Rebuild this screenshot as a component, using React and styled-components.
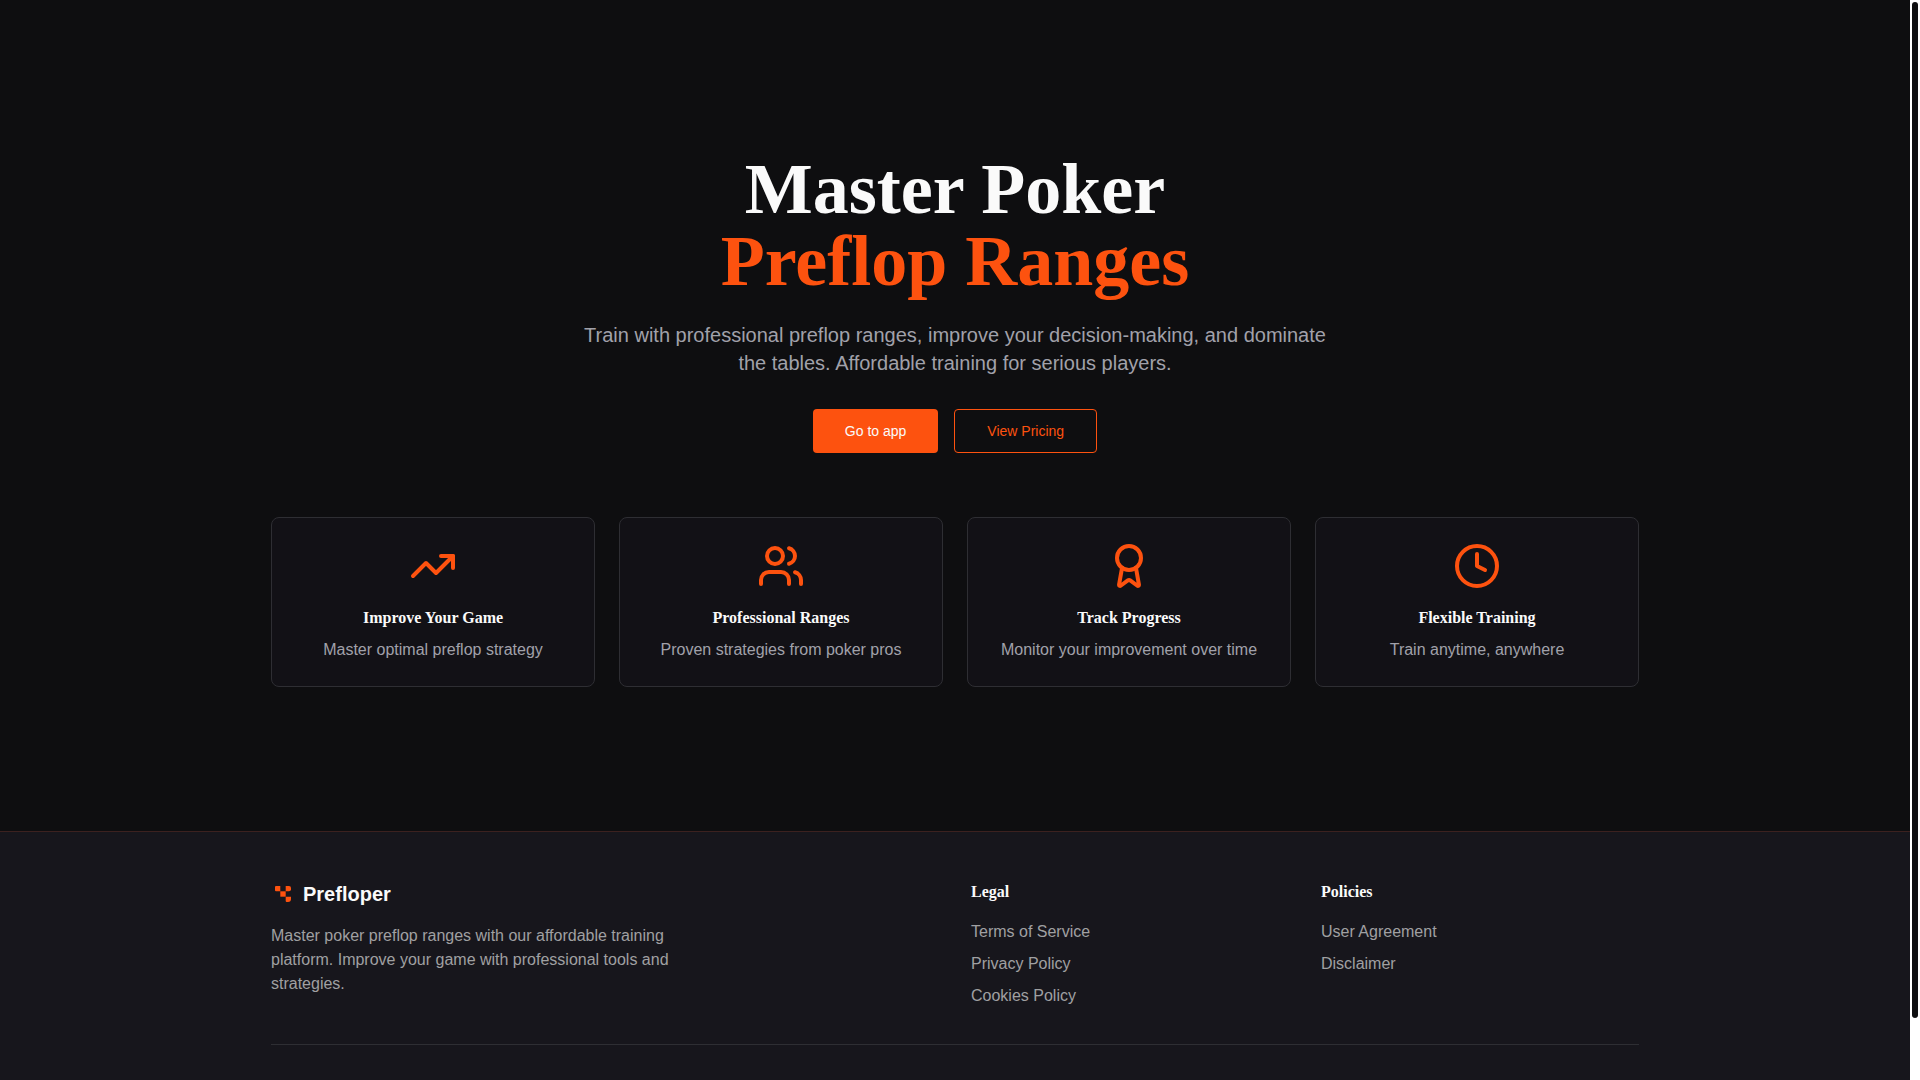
import { useEffect, useRef, useState } from "react"
import styled, { createGlobalStyle, css } from "styled-components"
import { TrendingUp, Users, Award, Clock } from "lucide-react"

const GlobalStyle = createGlobalStyle`
  :root {
    --color-accent: #fd520f;
    --color-white: #fafafa;
    --color-muted: #a1a1aa;
    --color-bg: #0e0e10;
    --color-card: #121116;
    --color-footer: #17161c;
    --color-line: #2e2e33;
    --font-heading: "Liberation Serif", serif;
    --font-body: "Liberation Sans", sans-serif;
  }

  *, *::before, *::after {
    box-sizing: border-box;
    margin: 0;
    padding: 0;
  }

  body {
    background-color: var(--color-bg);
    color: var(--color-white);
    font-family: var(--font-body);
    font-size: 16px;
    line-height: 24px;
  }
`

const Page = styled.div`
  display: flex;
  height: 100vh;
`

const ScrollArea = styled.div`
  flex: 1;
  min-width: 0;
  overflow-y: auto;
  scrollbar-width: none;
`

const ScrollTrack = styled.div`
  width: 10px;
  flex-shrink: 0;
  background-color: #ffffff;
`

const ScrollThumb = styled.div`
  border: 2px solid transparent;
  border-radius: 6px;
  background-color: var(--color-bg);
  background-clip: padding-box;
`

const Container = styled.div`
  width: 100%;
  max-width: 1400px;
  margin: 0 auto;
  padding: 0 16px;
`

const Hero = styled.main`
  padding: 153px 0 144px;
  text-align: center;
`

const Title = styled.h1`
  font-family: var(--font-heading);
  font-size: 72px;
  font-weight: 700;
  line-height: 72px;
  margin-bottom: 24px;
`

const TitleAccent = styled.span`
  display: block;
  color: var(--color-accent);
`

const Lead = styled.p`
  max-width: 768px;
  margin: 0 auto 32px;
  color: var(--color-muted);
  font-size: 20px;
  line-height: 28px;
`

const Actions = styled.div`
  display: flex;
  flex-wrap: wrap;
  justify-content: center;
  gap: 16px;
  margin-bottom: 64px;
`

const Button = styled.button`
  height: 44px;
  padding: 0 32px;
  border: none;
  border-radius: 4px;
  background-color: var(--color-accent);
  color: var(--color-white);
  font-family: var(--font-body);
  font-size: 14px;
  line-height: 20px;
  cursor: pointer;

  ${({ $outline }) => $outline && css`
    border: 1px solid var(--color-accent);
    background-color: transparent;
    color: var(--color-accent);
  `}
`

const Features = styled.div`
  display: grid;
  grid-template-columns: repeat(4, 1fr);
  gap: 24px;

  @media (max-width: 1023px) {
    grid-template-columns: repeat(2, 1fr);
  }
`

const Card = styled.div`
  display: flex;
  flex-direction: column;
  align-items: center;
  padding: 24px;
  border: 1px solid var(--color-line);
  border-radius: 8px;
  background-color: var(--color-card);

  svg {
    color: var(--color-accent);
    margin-bottom: 16px;
  }
`

const Heading = styled.h3`
  font-family: var(--font-heading);
  font-size: 16px;
  font-weight: 700;
  margin-bottom: ${({ $gap }) => $gap};
`

const CardText = styled.p`
  color: var(--color-muted);
`

const FooterWrapper = styled.footer`
  border-top: 1px solid #3c211f;
  background-color: var(--color-footer);
  padding: 48px 0;
`

const FooterGrid = styled.div`
  display: grid;
  grid-template-columns: repeat(4, 1fr);
  gap: 32px;
`

const Brand = styled.div`
  grid-column: span 2;
`

const BrandName = styled.div`
  display: flex;
  align-items: center;
  gap: 8px;
  margin-bottom: 16px;
  font-size: 20px;
  font-weight: 700;
  line-height: 28px;
`

const BrandText = styled.p`
  max-width: 448px;
  color: #a0a0a2;
`

const LinkList = styled.ul`
  display: flex;
  flex-direction: column;
  gap: 8px;
  list-style: none;
`

const FooterLink = styled.a`
  color: #a0a0a2;
  text-decoration: none;

  &:hover {
    color: var(--color-accent);
  }
`

const FooterBottom = styled.div`
  margin-top: 36px;
  border-top: 1px solid var(--color-line);
  height: 52px;
`

const features = [
  { icon: TrendingUp, title: "Improve Your Game", text: "Master optimal preflop strategy" },
  { icon: Users, title: "Professional Ranges", text: "Proven strategies from poker pros" },
  { icon: Award, title: "Track Progress", text: "Monitor your improvement over time" },
  { icon: Clock, title: "Flexible Training", text: "Train anytime, anywhere" },
]

const columns = [
  { title: "Legal", links: ["Terms of Service", "Privacy Policy", "Cookies Policy"] },
  { title: "Policies", links: ["User Agreement", "Disclaimer"] },
]

const Logo = () => (
  <svg width="24" height="24" viewBox="0 0 24 24" fill="#fd520f" aria-hidden="true">
    <path d="M5 4h4.3v5.3H5a1 1 0 0 1-1-1V5a1 1 0 0 1 1-1z" />
    <path d="M14.7 4H18a2 2 0 0 1 2 2v1.3a2 2 0 0 1-2 2h-3.3z" />
    <path d="M9.3 9.3h5.4v5.4H9.3z" />
    <path d="M14.7 14.7H20V17a3 3 0 0 1-3 3h-1.3a1 1 0 0 1-1-1z" />
  </svg>
)

const App = () => {
  const areaRef = useRef(null)
  const [thumb, setThumb] = useState({ height: 0, top: 0 })

  useEffect(() => {
    const area = areaRef.current
    const update = () => {
      const ratio = area.clientHeight / area.scrollHeight
      setThumb({
        height: ratio < 1 ? Math.round(area.clientHeight * ratio) : 0,
        top: Math.round(area.scrollTop * ratio),
      })
    }

    update()
    area.addEventListener("scroll", update)
    window.addEventListener("resize", update)
    return () => {
      area.removeEventListener("scroll", update)
      window.removeEventListener("resize", update)
    }
  }, [])

  return (
    <Page>
      <GlobalStyle />
      <ScrollArea ref={areaRef}>
        <Hero>
          <Container>
            <Title>
              Master Poker
              <TitleAccent>Preflop Ranges</TitleAccent>
            </Title>
            <Lead>
              Train with professional preflop ranges, improve your decision-making, and dominate the tables. Affordable training for serious players.
            </Lead>
            <Actions>
              <Button type="button">Go to app</Button>
              <Button type="button" $outline>View Pricing</Button>
            </Actions>
            <Features>
              {features.map(({ icon: Icon, title, text }) => (
                <Card key={title}>
                  <Icon size={48} />
                  <Heading $gap="8px">{title}</Heading>
                  <CardText>{text}</CardText>
                </Card>
              ))}
            </Features>
          </Container>
        </Hero>
        <FooterWrapper>
          <Container>
            <FooterGrid>
              <Brand>
                <BrandName>
                  <Logo />
                  Prefloper
                </BrandName>
                <BrandText>
                  Master poker preflop ranges with our affordable training platform. Improve your game with professional tools and strategies.
                </BrandText>
              </Brand>
              {columns.map(({ title, links }) => (
                <div key={title}>
                  <Heading $gap="16px">{title}</Heading>
                  <LinkList>
                    {links.map((link) => (
                      <li key={link}>
                        <FooterLink href="#">{link}</FooterLink>
                      </li>
                    ))}
                  </LinkList>
                </div>
              ))}
            </FooterGrid>
            <FooterBottom />
          </Container>
        </FooterWrapper>
      </ScrollArea>
      <ScrollTrack aria-hidden="true">
        <ScrollThumb style={{ height: thumb.height, marginTop: thumb.top }} />
      </ScrollTrack>
    </Page>
  )
}

export default App
